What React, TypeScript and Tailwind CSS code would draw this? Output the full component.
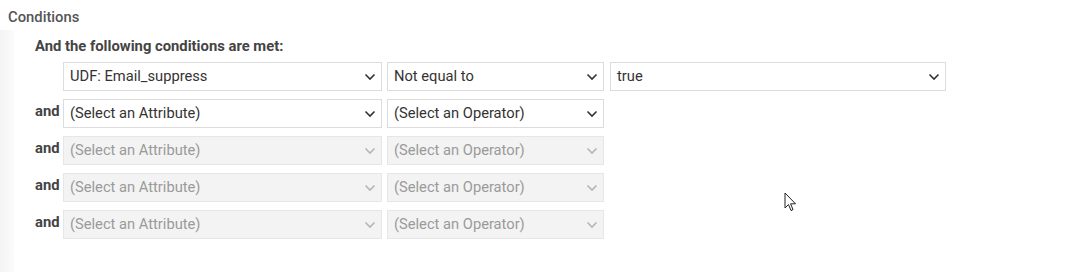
import React from "react";

const Chevron = ({ disabled }: { disabled?: boolean }) => (
  <svg width="12" height="8" viewBox="0 0 12 8" className="shrink-0">
    <polyline
      points="1.5,1.5 6,6 10.5,1.5"
      fill="none"
      stroke={disabled ? "#b5b5b5" : "#333333"}
      strokeWidth="1.6"
    />
  </svg>
);

const Select = ({
  text,
  width,
  disabled,
}: {
  text: string;
  width: string;
  disabled?: boolean;
}) => (
  <div
    className={`${width} h-[29px] flex items-center justify-between pl-[6px] pr-[5px] border ${
      disabled
        ? "bg-[#f3f3f3] border-[#e6e6e6] text-[#9a9a9a]"
        : "bg-white border-[#dcdcdc] text-[#333333]"
    } text-[14.7px]`}
  >
    <span>{text}</span>
    <Chevron disabled={disabled} />
  </div>
);

const rows = [
  { attr: "(Select an Attribute)", op: "(Select an Operator)", disabled: false },
  { attr: "(Select an Attribute)", op: "(Select an Operator)", disabled: true },
  { attr: "(Select an Attribute)", op: "(Select an Operator)", disabled: true },
  { attr: "(Select an Attribute)", op: "(Select an Operator)", disabled: true },
];

export default function App() {
  return (
    <div
      className="relative w-[1065px] h-[272px] bg-white overflow-hidden"
      style={{ fontFamily: "Roboto, 'Liberation Sans', sans-serif" }}
    >
      <div className="w-full">
        <div className="pl-[8px] pt-[6px] h-[30px] text-[14.8px] font-medium text-[#555555]">
          Conditions
        </div>
        <div className="flex">
          <div className="w-[14px] h-[242px] bg-gradient-to-r from-[#f4f4f4] to-[#fbfbfb]" />
          <div className="pl-[21px]">
            <div className="h-[32px] pt-[5px] text-[14.8px] font-bold text-[#444444]">
              And the following conditions are met:
            </div>
            <div className="flex flex-col gap-[8px]">
              <div className="flex pl-[28px]">
                <Select text="UDF: Email_suppress" width="w-[319px]" />
                <div className="w-[5px]" />
                <Select text="Not equal to" width="w-[217px]" />
                <div className="w-[6px]" />
                <Select text="true" width="w-[336px]" />
              </div>
              {rows.map((r, i) => (
                <div key={i} className="flex">
                  <div className="w-[28px] pt-[4px] text-[14.8px] font-bold text-[#444444] leading-[16px]">
                    and
                  </div>
                  <div className="flex gap-[5px]">
                    <Select text={r.attr} width="w-[319px]" disabled={r.disabled} />
                    <Select text={r.op} width="w-[217px]" disabled={r.disabled} />
                  </div>
                </div>
              ))}
            </div>
          </div>
        </div>
      </div>
      <svg
        className="absolute left-[784px] top-[192px]"
        width="14"
        height="22"
        viewBox="0 0 14 22"
      >
        <path
          d="M1 1 L1 16 L4.5 12.5 L7 18.5 L9 17.6 L6.6 11.8 L11.5 11.8 Z"
          fill="white"
          stroke="#222"
          strokeWidth="1"
          strokeLinejoin="round"
        />
      </svg>
    </div>
  );
}
